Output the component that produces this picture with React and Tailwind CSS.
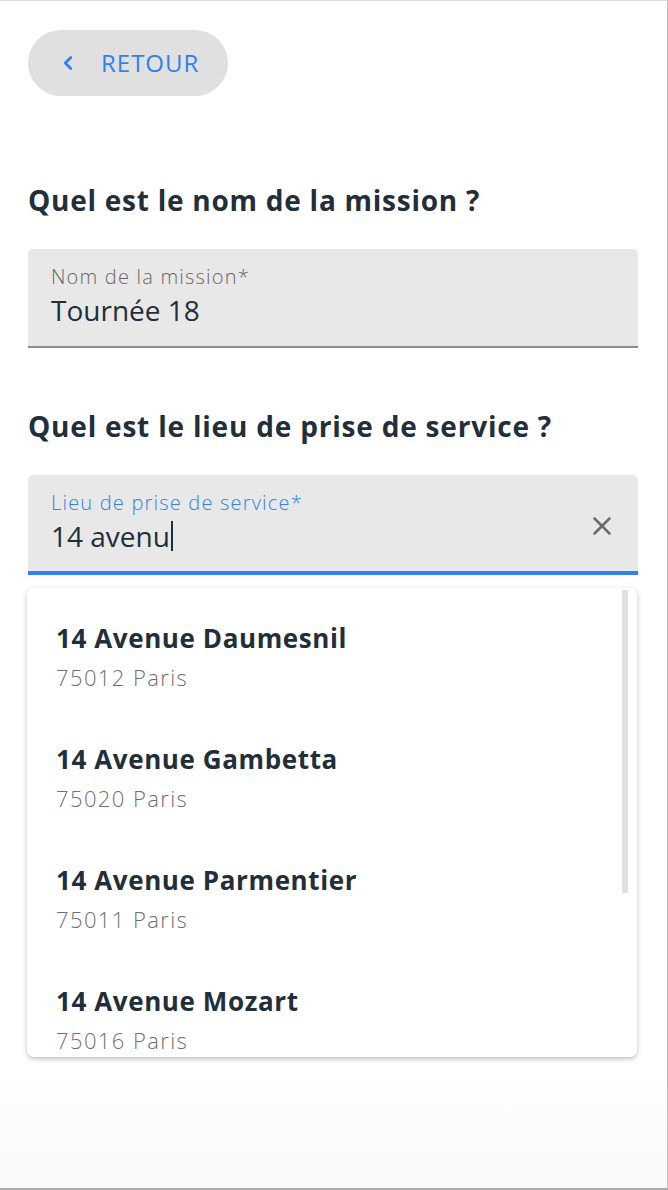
import { ChevronLeft, X } from 'lucide-react'

const SUGGESTIONS = [
  { street: '14 Avenue Daumesnil', city: '75012 Paris' },
  { street: '14 Avenue Gambetta', city: '75020 Paris' },
  { street: '14 Avenue Parmentier', city: '75011 Paris' },
  { street: '14 Avenue Mozart', city: '75016 Paris' },
]

const font = { fontFamily: '"Open Sans", Lato, sans-serif' }

export default function App() {
  return (
    <div className="w-[668px] h-[1190px] bg-white border-t border-t-[#dcdcdc] border-r border-r-[#b9bdcc] border-b-2 border-b-[#a9a9a9] overflow-hidden" style={font}>
      <div className="h-full flex flex-col pl-[28px] pr-[29px] pt-[29px] bg-gradient-to-b from-white from-90% to-[#f8f8f8]">
        {/* retour */}
        <button className="w-[200px] h-[66px] rounded-full bg-[#e0e0e0] flex items-center pl-[29px] gap-[22px] text-[#2f80f0]">
          <ChevronLeft size={22} strokeWidth={3} />
          <span className="text-[24px] tracking-[1px]">RETOUR</span>
        </button>

        <h2 className="mt-[86px] text-[28px] font-bold text-[#222f3a] leading-[36px] tracking-[0.75px]">Quel est le nom de la mission ?</h2>

        <div className="mt-[31px] h-[99px] bg-[#e8e8e8] rounded-t-[5px] border-b-2 border-b-[#8c8c8c] px-[23px] pt-[14px]">
          <p className="text-[20px] text-[#676767] leading-[28px] tracking-[1.2px] font-light">Nom de la mission*</p>
          <p className="text-[28px] text-[#222f3a] leading-[36px] mt-[1px]">Tournée 18</p>
        </div>

        <h2 className="mt-[60px] text-[28px] font-bold text-[#222f3a] leading-[36px] tracking-[0.8px]">Quel est le lieu de prise de service ?</h2>

        {/* champ adresse */}
        <div className="relative mt-[31px]">
          <div className="h-[100px] bg-[#e8e8e8] rounded-t-[5px] border-b-[4px] border-b-[#2f80f0] px-[23px] pt-[14px] flex items-start">
            <div className="flex-1">
              <p className="text-[20px] text-[#2f80f0] leading-[28px] tracking-[1.2px] font-light">Lieu de prise de service*</p>
              <p className="text-[28px] text-[#222f3a] leading-[36px] mt-[1px] flex items-center">
                14 avenu<span className="inline-block w-[2px] h-[30px] bg-[#222f3a] ml-[1px]" />
              </p>
            </div>
            <X size={30} strokeWidth={2} className="text-[#6a6a6a] mt-[22px] mr-[-2px]" />
          </div>

          <div className="absolute left-[-1px] top-[113px] w-[610px] h-[469px] bg-white rounded-[7px] shadow-[0_2px_5px_rgba(0,0,0,0.25)] overflow-hidden">
            <div className="absolute right-[9px] top-[2px] w-[6px] h-[303px] bg-[#e0e0e0]" />
            {SUGGESTIONS.map(s => (
              <div key={s.street} className="pl-[29px] pt-[32px] pb-[17px]">
                <p className="text-[26px] font-bold text-[#222f3a] leading-[36px] tracking-[0.6px]">{s.street}</p>
                <p className="text-[22px] text-[#6f6f6f] leading-[30px] mt-[6px] tracking-[1.4px] font-light">{s.city}</p>
              </div>
            ))}
          </div>
        </div>
      </div>
    </div>
  )
}
